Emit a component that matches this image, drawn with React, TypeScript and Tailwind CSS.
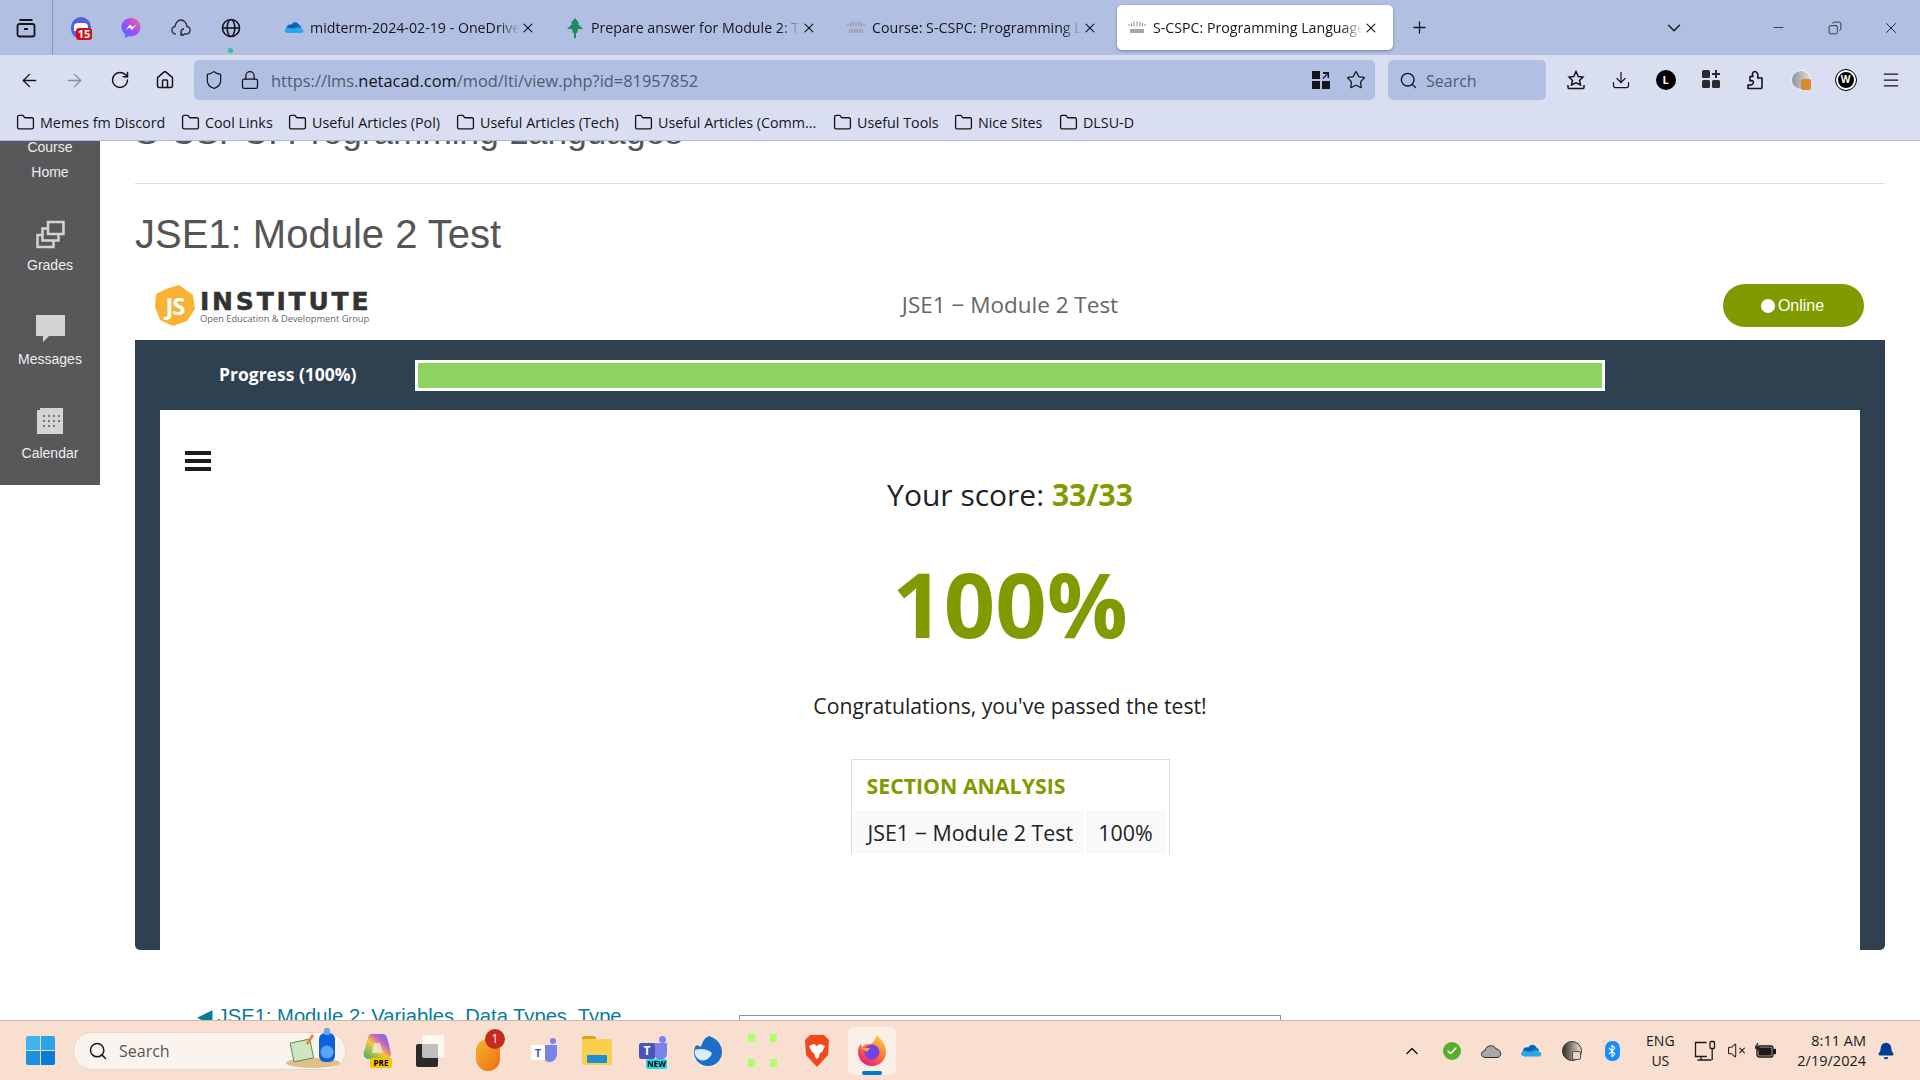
import {
  ArrowLeft, ArrowRight, RotateCw, Home, Shield, Lock, Star, Download, Menu, Search, X, Plus,
  ChevronDown, ChevronUp, Minus, Copy, Folder, Check, Bluetooth, VolumeX, Bell,
} from "lucide-react";

const sans = "font-['Open_Sans',sans-serif]";

const bookmarks = [
  { label: "Memes fm Discord", w: "w-[165px]" },
  { label: "Cool Links", w: "w-[107px]" },
  { label: "Useful Articles (Pol)", w: "w-[168px]" },
  { label: "Useful Articles (Tech)", w: "w-[178px]" },
  { label: "Useful Articles (Comm...", w: "w-[199px]" },
  { label: "Useful Tools", w: "w-[121px]" },
  { label: "Nice Sites", w: "w-[105px]" },
  { label: "DLSU-D", w: "w-[90px]" },
];

function CiscoIcon() {
  return (
    <svg width="18" height="13" viewBox="0 0 18 13">
      <g stroke="#8a8f99" strokeWidth="1">
        <path d="M1 3v2M3.500 2v3.500M6 0.500v5M9 0.500v5M12 0.500v5M14.500 2v3.500M17 3v2" />
      </g>
      <rect x="2" y="8" width="14" height="4" fill="#a4a9b3" />
    </svg>
  );
}

function OneDriveIcon({ size = 22 }: { size?: number }) {
  return (
    <svg width={size} height={size * 0.65} viewBox="0 0 24 16">
      <path d="M9 13 15 5c3-1 6 1 6 4z" fill="#0f78d4" />
      <path d="M3 9c0-3 3-5 6-4 2-4 7-4 9 0l-6 4-6 6H5c-2 0-2-4-2-6z" fill="#0364b8" />
      <path d="M8 15c-3 0-7 0-7-3s3-4 5-3l6 1 6-2 5 3c1 2 0 4-2 4z" fill="#28a8ea" />
    </svg>
  );
}

function TreeIcon() {
  return (
    <svg width="18" height="22" viewBox="0 0 18 22">
      <path d="M9 1 13 6 12 7 17 12 12 12 11 16 7 16 6 12 1 12 6 7 5 6z" fill="#1f8a5f" />
      <path d="M8 14h2v7H8z" fill="#1f8a5f" />
    </svg>
  );
}

function Tab({ icon, label, active }: { icon: React.ReactNode; label: string; active?: boolean }) {
  return (
    <div
      className={`flex items-center w-[276px] h-[45px] pl-[10px] pr-[14px] rounded-[5px] shrink-0 ${
        active ? "bg-white shadow-[0_1px_3px_rgba(0,0,0,0.35)]" : ""
      }`}
    >
      <div className="w-[20px] flex justify-center shrink-0">{icon}</div>
      <div className="ml-[6px] w-[212px] overflow-hidden whitespace-nowrap text-[14.200px] text-[#15141a] [mask-image:linear-gradient(to_right,black_90%,transparent)]">
        {label}
      </div>
      <X size={16} strokeWidth={1.6} className="ml-auto text-[#15141a]" />
    </div>
  );
}

function BrowserChrome() {
  return (
    <div className={`shrink-0 ${sans}`}>
      <div className="flex items-center h-[55px] bg-[#b1bfe3]">
        <div className="flex items-center justify-center w-[53px] h-full border-r border-[#8b97b8]">
          <svg width="20" height="20" viewBox="0 0 20 20" fill="none" stroke="#15141a" strokeWidth="1.8">
            <rect x="1.5" y="6" width="17" height="12.5" rx="2" />
            <path d="M3.5 2h13M8 11h4" />
          </svg>
        </div>
        <div className="flex items-center justify-center w-[50px] ml-[3px]">
          <div className="relative w-[20px] h-[22px] rounded-full bg-[#5b5fd6]">
            <div className="absolute left-[3px] top-[6px] w-[14px] h-[8px] rounded-t bg-white" />
            <div className="absolute left-[5px] top-[11px] w-[16px] h-[12px] rounded-[3px] bg-[#d0101a] text-white text-[11px] font-bold leading-[12px] text-center">15</div>
          </div>
        </div>
        <div className="flex items-center justify-center w-[50px]">
          <svg width="20" height="22" viewBox="0 0 20 22">
            <defs>
              <linearGradient id="msgr" x1="0" y1="1" x2="1" y2="0">
                <stop offset="0" stopColor="#2f7bff" />
                <stop offset="0.5" stopColor="#a04bff" />
                <stop offset="1" stopColor="#ff6a7a" />
              </linearGradient>
            </defs>
            <path d="M10 1C4.5 1 .5 5 .5 10c0 3 1.300 5.300 3.500 7v4l3.500-2c.8.2 1.600.3 2.500.3 5.500 0 9.500-4.300 9.500-9.300S15.500 1 10 1z" fill="url(#msgr)" />
            <path d="M4.500 13 9 7.500l2.500 2.500 4-2.500L11 13l-2.500-2.500z" fill="#fff" />
          </svg>
        </div>
        <div className="flex items-center justify-center w-[50px]">
          <svg width="20" height="20" viewBox="0 0 20 20" fill="none" stroke="#2b2a33" strokeWidth="1.300">
            <path d="M5 16c-3 0-4-2-4-4 0-2 1.500-3.500 3-3.500C4.500 5 7 2 10 2s5.500 3 6 6.500c1.500 0 3 1.500 3 3.500s-1 4-4 4h-2" />
            <path d="M13 11a3 3 0 1 0 0 6h-3v-3" />
          </svg>
        </div>
        <div className="relative flex items-center justify-center w-[50px]">
          <svg width="20" height="20" viewBox="0 0 20 20" fill="none" stroke="#15141a" strokeWidth="1.600">
            <circle cx="10" cy="10" r="8.500" />
            <ellipse cx="10" cy="10" rx="3.800" ry="8.500" />
            <path d="M1.500 10h17" />
          </svg>
          <div className="absolute left-[22px] top-[30px] w-[5px] h-[5px] rounded-full bg-[#2fc4a0]" />
        </div>
        <div className="flex items-center gap-[5px] ml-[18px]">
          <Tab icon={<OneDriveIcon />} label="midterm-2024-02-19 - OneDrive" />
          <Tab icon={<TreeIcon />} label="Prepare answer for Module 2: Test" />
          <Tab icon={<CiscoIcon />} label="Course: S-CSPC: Programming Languages" />
          <Tab icon={<CiscoIcon />} label="S-CSPC: Programming Languages" active />
        </div>
        <Plus size={19} strokeWidth={1.6} className="ml-[17px] text-[#15141a]" />
        <ChevronDown size={22} strokeWidth={1.500} className="ml-[234px] text-[#15141a]" />
        <Minus size={15} strokeWidth={1.200} className="ml-[86px] text-[#15141a]" />
        <Copy size={14} strokeWidth={1.300} className="ml-[42px] -scale-x-100 text-[#15141a]" />
        <X size={18} strokeWidth={1.200} className="ml-[40px] text-[#15141a]" />
      </div>

      <div className="flex items-center h-[50px] pl-[7px] pt-[5px] pb-[5px] bg-[#d9dff1]">
        <div className="flex w-[180px] text-[#15141a]">
          <div className="w-[45px] flex justify-center"><ArrowLeft size={21} strokeWidth={1.600} /></div>
          <div className="w-[45px] flex justify-center"><ArrowRight size={21} strokeWidth={1.600} className="text-[#8b8e99]" /></div>
          <div className="w-[45px] flex justify-center"><RotateCw size={20} strokeWidth={1.800} /></div>
          <div className="w-[45px] flex justify-center"><Home size={20} strokeWidth={1.800} /></div>
        </div>
        <div className="flex items-center w-[1181px] h-[40px] ml-[7px] pl-[10px] pr-[9px] rounded-[5px] bg-[#b1bfe3] text-[#15141a]">
          <Shield size={20} strokeWidth={1.500} />
          <Lock size={20} strokeWidth={1.500} className="ml-[16px]" />
          <div className="ml-[11px] mt-[2px] text-[16.400px] text-[#555a70] whitespace-nowrap">
            https://lms.<span className="text-[#15141a]">netacad.com</span>/mod/lti/view.php?id=81957852
          </div>
          <svg width="18" height="18" viewBox="0 0 18 18" className="ml-auto" fill="#15141a">
            <rect x="0" y="0" width="8" height="8" />
            <rect x="0" y="10" width="8" height="8" />
            <rect x="10" y="10" width="8" height="8" />
            <path d="M11 1h6v6h-1.500V3.600L11.500 8 10.500 7l4-4H11z" />
          </svg>
          <Star size={20} strokeWidth={1.500} className="ml-[16px]" />
        </div>
        <div className="flex items-center w-[158px] h-[40px] ml-[13px] pl-[11px] rounded-[5px] bg-[#b1bfe3]">
          <Search size={19} strokeWidth={1.700} className="text-[#15141a]" />
          <div className="ml-[8px] mt-[2px] text-[16px] text-[#555a70]">Search</div>
        </div>
        <div className="flex ml-[7px] text-[#15141a]">
          <div className="w-[45px] flex justify-center">
            <svg width="20" height="20" viewBox="0 0 20 20" fill="none" stroke="#15141a" strokeWidth="1.500">
              <path d="M10 1.500 12.300 6.500 17 7 13.500 10.500 14.500 15 10 12.800 5.500 15 6.500 10.500 3 7 7.700 6.500z" />
              <path d="M2 15v2.500a1 1 0 0 0 1 1h14a1 1 0 0 0 1-1V15" />
            </svg>
          </div>
          <div className="w-[45px] flex justify-center"><Download size={20} strokeWidth={1.500} /></div>
          <div className="w-[45px] flex justify-center">
            <div className="w-[20px] h-[20px] rounded-full bg-black text-white text-[11px] font-bold leading-[20px] text-center">L</div>
          </div>
          <div className="w-[45px] flex justify-center">
            <svg width="18" height="18" viewBox="0 0 18 18" fill="#2b2a33">
              <rect x="0" y="0" width="8" height="8" rx="1.500" />
              <rect x="0" y="10" width="8" height="8" rx="1.500" />
              <rect x="10" y="10" width="8" height="8" rx="1.500" />
              <path d="M13 0h2v3h3v2h-3v3h-2V5h-3V3h3z" />
            </svg>
          </div>
          <div className="w-[45px] flex justify-center">
            <svg width="20" height="20" viewBox="0 0 20 20" fill="none" stroke="#15141a" strokeWidth="1.600" strokeLinejoin="round">
              <path d="M2 18.500h13a1 1 0 0 0 1-1V8h-4.500c1.500-3-.5-6.500-2.500-6.500S5.500 3.500 7 6.500H4v4.500c2-1 3.500 0 3.500 1.500s-2 3-5.500 2.500z" />
            </svg>
          </div>
          <div className="w-[45px] flex justify-center">
            <div className="relative w-[20px] h-[20px] rounded-full bg-gradient-to-r from-[#8f949c] to-[#d8dade] border border-[#f2f2f2]">
              <div className="absolute right-[-1px] bottom-[-1px] w-[10px] h-[11px] rounded-[2px] bg-[#d98a2b]" />
            </div>
          </div>
          <div className="w-[45px] flex justify-center">
            <div className="w-[20px] h-[20px] rounded-full bg-black border-2 border-double border-white outline outline-1 outline-black text-white text-[10px] font-bold leading-[15px] text-center">W</div>
          </div>
          <div className="w-[45px] flex justify-center"><Menu size={20} strokeWidth={1.500} /></div>
        </div>
      </div>

      <div className="flex items-center h-[36px] pl-[16px] bg-[#d9dff1] border-b border-[#a9b8e2]">
        {bookmarks.map((b) => (
          <div key={b.label} className={`flex items-center shrink-0 ${b.w}`}>
            <Folder size={19} strokeWidth={1.700} className="text-[#15141a] shrink-0" />
            <div className="ml-[5px] text-[14.300px] text-[#15141a] whitespace-nowrap">{b.label}</div>
          </div>
        ))}
      </div>
    </div>
  );
}

function SideItem({ icon, label, className, gap }: { icon: React.ReactNode; label: string; className: string; gap: string }) {
  return (
    <div className={`flex flex-col items-center ${className}`}>
      {icon}
      <div className={`leading-[20px] ${gap}`}>{label}</div>
    </div>
  );
}

function Sidebar() {
  return (
    <div className="flex flex-col w-[100px] h-[344px] shrink-0 bg-[#58585a] text-[14px] text-[#eeeeee] font-['Liberation_Sans',sans-serif]">
      <div className="flex flex-col items-center leading-[25px] mt-[-6px]">
        <div>Course</div>
        <div>Home</div>
      </div>
      <SideItem
        className="mt-[35px]"
        gap="mt-[6px]"
        label="Grades"
        icon={
          <svg width="29" height="29" viewBox="0 0 29 29" fill="none" stroke="#d4d4d4" strokeWidth="2.500">
            <rect x="1.500" y="15" width="16" height="12" />
            <rect x="6.500" y="8.500" width="16" height="12" fill="#58585a" />
            <rect x="12" y="2" width="15.500" height="12" fill="#58585a" />
          </svg>
        }
      />
      <SideItem
        className="mt-[40px]"
        gap="mt-[7px]"
        label="Messages"
        icon={
          <svg width="29" height="27" viewBox="0 0 29 27" fill="#d4d4d4">
            <path d="M0 0h29v21H13l-6 6v-6H0z" />
          </svg>
        }
      />
      <SideItem
        className="mt-[38px]"
        gap="mt-[9px]"
        label="Calendar"
        icon={
          <svg width="27" height="27" viewBox="0 0 27 27">
            <rect x="0" y="1" width="26" height="26" fill="#d4d4d4" />
            <rect x="0" y="0" width="3" height="3" fill="#58585a" />
            <g fill="#777">
              <path d="M6 8h2v2H6zM11 8h2v2h-2zM16 8h2v2h-2zM21 8h2v2h-2zM6 13h2v2H6zM11 13h2v2h-2zM16 13h2v2h-2zM21 13h2v2h-2zM6 18h2v2H6zM11 18h2v2h-2zM16 18h2v2h-2z" />
            </g>
          </svg>
        }
      />
    </div>
  );
}

function Logo() {
  return (
    <div className="flex items-center w-[250px] h-[43px] pl-[20px] shrink-0">
      <div className="relative flex items-center justify-center w-[40px] h-[41px] shrink-0">
        <svg width="40" height="41" viewBox="0 0 40 41" className="absolute inset-0">
          <path d="M24 0 38 10 40 24 32 36 18 41 5 35 0 22 1 9 11 4z" fill="#f9b233" />
        </svg>
        <div className={`relative text-[24px] font-bold text-white tracking-[-1px] ${sans}`}>JS</div>
      </div>
      <div className="ml-[5px] flex flex-col mt-[6px]">
        <div className="font-['DejaVu_Sans',sans-serif] font-bold text-[25px] leading-[22px] tracking-[2.800px] text-[#333333] whitespace-nowrap [-webkit-text-stroke:0.5px_#333333]">
          INSTITUTE
        </div>
        <div className={`text-[9.300px] leading-[14px] mt-[-1px] text-[#666666] whitespace-nowrap ${sans}`}>
          Open Education &amp; Development Group
        </div>
      </div>
    </div>
  );
}

function ResultPanel() {
  return (
    <div className={`flex flex-col w-[1750px] h-[610px] px-[25px] rounded-b-[5px] bg-[#2f4050] ${sans}`}>
      <div className="flex items-center h-[70px] shrink-0">
        <div className="ml-[59px] mt-[-2px] w-[196px] text-[17.500px] font-bold text-white">Progress (100%)</div>
        <div className="w-[1190px] h-[31px] border-[3px] border-white bg-[#8cd35f]" />
      </div>
      <div className="relative flex flex-col items-center flex-1 bg-white text-[#222222]">
        <div className="absolute left-[25px] top-[41px] flex flex-col gap-[4px] w-[26px]">
          <div className="h-[4px] bg-[#1c1c1c]" />
          <div className="h-[4px] bg-[#1c1c1c]" />
          <div className="h-[4px] bg-[#1c1c1c]" />
        </div>
        <div className="mt-[63px] text-[30px] leading-[44px]">
          Your score: <span className="font-bold text-[#7f9b00]">33/33</span>
        </div>
        <div className="mt-[26px] text-[90px] font-bold leading-[120px] text-[#7f9b00]">100%</div>
        <div className="mt-[28px] text-[21.200px] leading-[30px]">Congratulations, you've passed the test!</div>
        <div className="mt-[38px] w-[319px] h-[95px] shrink-0 overflow-hidden border-x border-t border-[#dddddd] px-[3px] pt-[3px]">
          <div className="h-[47px] pl-[12px] pt-[1px] text-[21.300px] font-bold leading-[44px] text-[#7f9b00]">SECTION ANALYSIS</div>
          <div className="flex gap-[2px] h-[44px] text-[21.400px] leading-[46px]">
            <div className="w-[229px] pl-[13px] bg-[#f9f9f9] whitespace-nowrap">JSE1 − Module 2 Test</div>
            <div className="flex-1 text-center bg-[#f9f9f9]">100%</div>
          </div>
        </div>
      </div>
    </div>
  );
}

function PageContent() {
  return (
    <div className="flex flex-col w-[1750px] ml-[35px] shrink-0 font-['Liberation_Sans',sans-serif]">
      <div className="h-[42px] shrink-0 mt-[-30px] text-[35.200px] leading-[42px] text-[#555555] whitespace-nowrap">
        S-CSPC: Programming Languages
      </div>
      <div className="h-px shrink-0 mt-[30px] bg-[#dddddd]" />
      <div className="h-[42px] shrink-0 mt-[29px] text-[40px] leading-[42px] text-[#555555]">JSE1: Module 2 Test</div>
      <div className="flex items-center h-[43px] shrink-0 mt-[29px]">
        <Logo />
        <div className={`flex-1 mt-[-2px] text-center text-[22.500px] text-[#666666] ${sans}`}>JSE1 − Module 2 Test</div>
        <div className="flex justify-end w-[250px] shrink-0 pr-[21px]">
          <div className="flex items-center justify-center w-[141px] h-[43px] rounded-full bg-[#7f9b00] text-[16px] text-white">
            <div className="w-[14px] h-[14px] rounded-full bg-white mr-[3px] ml-[-2px]" />
            Online
          </div>
        </div>
      </div>
      <div className="mt-[13px] shrink-0">
        <ResultPanel />
      </div>
      <div className="flex shrink-0 mt-[54px]">
        <div className="ml-[62px] w-[542px] text-[20.200px] leading-[24px] text-[#0b7a9a] whitespace-nowrap">
          ◀ JSE1: Module 2: Variables, Data Types, Type
        </div>
        <div className="mt-[11px] w-[542px] h-[40px] border border-[#8a8f99] bg-white" />
      </div>
    </div>
  );
}

function Slot({ w, children }: { w: string; children: React.ReactNode }) {
  return <div className={`relative flex items-center justify-center h-[48px] shrink-0 ${w}`}>{children}</div>;
}

function Taskbar() {
  return (
    <div className={`flex items-center h-[60px] shrink-0 border-t border-[#c8b8ac] bg-[#f8dfcf] ${sans}`}>
      <div className="grid grid-cols-2 gap-[1px] w-[29px] h-[29px] ml-[26px] shrink-0">
        <div className="rounded-tl-[2px] bg-[#3fb5ee]" />
        <div className="rounded-tr-[2px] bg-[#2aa3e8]" />
        <div className="rounded-bl-[2px] bg-[#1b90e0]" />
        <div className="rounded-br-[2px] bg-[#0a7ed6]" />
      </div>
      <div className="flex items-center w-[273px] h-[38px] ml-[18px] pl-[14px] rounded-full border border-[#e6d6ca] bg-[#fbf3ee]">
        <Search size={20} strokeWidth={1.800} className="text-[#1a1a1a]" />
        <div className="ml-[11px] text-[16px] text-[#555555]">Search</div>
        <svg width="54" height="42" viewBox="0 0 54 42" className="ml-auto mr-[5px] mt-[-6px]">
          <ellipse cx="27" cy="36" rx="27" ry="5" fill="#e3bd8a" />
          <rect x="6" y="14" width="20" height="19" rx="1" transform="rotate(-12 16 24)" fill="#cfe6c0" stroke="#5c8f4a" />
          <path d="M20 16 26 7l2 2-6 9z" fill="#e8833a" />
          <rect x="33" y="6" width="16" height="29" rx="6" fill="#0a63dc" />
          <rect x="38" y="1" width="6" height="7" rx="2" fill="#6aa6f0" />
          <circle cx="41" cy="25" r="6.500" fill="#5aa5f5" />
        </svg>
      </div>
      <div className="flex ml-[4px]">
        <Slot w="w-[54px]">
          <svg width="28" height="32" viewBox="0 0 28 32" className="mt-[-6px]">
            <defs>
              <linearGradient id="cop" x1="0" y1="1" x2="1" y2="0">
                <stop offset="0" stopColor="#2fb36a" />
                <stop offset="0.45" stopColor="#f4c63d" />
                <stop offset="0.7" stopColor="#c25bd0" />
                <stop offset="1" stopColor="#2a8fe6" />
              </linearGradient>
            </defs>
            <path d="M8 2h12c3 0 4 3 5 7l3 12c0 4-3 6-6 6H6c-4 0-6-3-5-7L5 6c0-2 1-4 3-4z" fill="url(#cop)" />
            <path d="M11 11h6l3 10H9z" fill="#f4ecf0" opacity="0.75" />
          </svg>
          <div className="absolute left-[20px] top-[31px] w-[22px] h-[10px] rounded-[2px] bg-[#f7c400] text-[8px] font-bold leading-[10px] text-center text-black">PRE</div>
        </Slot>
        <Slot w="w-[52px]">
          <div className="relative w-[28px] h-[32px]">
            <div className="absolute left-0 bottom-0 w-[22px] h-[23px] rounded-[2px] bg-[#2a2a2a]" />
            <div className="absolute right-0 top-0 w-[22px] h-[23px] rounded-[2px] bg-white/70" />
          </div>
        </Slot>
        <Slot w="w-[64px]">
          <div className="w-[24px] h-[32px] mt-[8px] rounded-full bg-gradient-to-br from-[#efb62b] to-[#ee6a13]" />
          <div className="absolute left-[29px] top-[2px] w-[20px] h-[20px] rounded-full bg-[#c42b1c] text-white text-[12px] leading-[20px] text-center">1</div>
        </Slot>
        <Slot w="w-[48px]">
          <div className="relative w-[26px] h-[26px]">
            <div className="absolute right-0 top-[7px] w-[15px] h-[17px] rounded-b-full bg-[#7b83eb]" />
            <div className="absolute right-[1px] top-0 w-[6px] h-[6px] rounded-full bg-[#7b83eb]" />
            <div className="absolute left-0 top-[7px] w-[14px] h-[15px] bg-white text-[#4b53bc] text-[11px] font-bold leading-[15px] text-center">T</div>
          </div>
        </Slot>
        <Slot w="w-[58px]">
          <div className="relative w-[30px] h-[26px] mt-[2px]">
            <div className="absolute left-0 top-[-3px] w-[14px] h-[6px] rounded-t-[2px] bg-[#d9a520]" />
            <div className="absolute inset-0 rounded-[2px] bg-[#fbcf4e]" />
            <div className="absolute left-[5px] right-[5px] bottom-[2px] h-[8px] rounded-[1px] bg-[#1d8fd6]" />
          </div>
        </Slot>
        <Slot w="w-[54px]">
          <div className="relative w-[28px] h-[30px]">
            <div className="absolute right-0 top-[7px] w-[13px] h-[17px] rounded-b-full bg-[#7b83eb]" />
            <div className="absolute right-[1px] top-0 w-[7px] h-[7px] rounded-full bg-[#7b83eb]" />
            <div className="absolute left-0 top-[7px] w-[16px] h-[16px] rounded-[2px] bg-[#4b53bc] text-white text-[12px] font-bold leading-[16px] text-center">T</div>
            <div className="absolute left-[7px] bottom-[-3px] w-[21px] h-[10px] rounded-[2px] bg-[#26d9e6] text-[8px] font-bold leading-[10px] text-center text-black">NEW</div>
          </div>
        </Slot>
        <Slot w="w-[54px]">
          <svg width="32" height="32" viewBox="0 0 32 32">
            <path d="M18 1c7 2 13 8 13 16a14 14 0 0 1-28 0c0-2 .5-4 1.500-6 2-1 4 0 5 1 2-3 2-8 8.500-11z" fill="#1c6fc9" />
            <path d="M4 15c5-2 13-1 17 3-2 6-8 9-12 7-4-2-6-6-5-10z" fill="#d8ecfb" />
          </svg>
        </Slot>
        <Slot w="w-[56px]">
          <div className="grid grid-cols-2 gap-x-[15px] gap-y-[17px]">
            <div className="w-[7px] h-[8px] bg-[#adff6e]" />
            <div className="w-[7px] h-[8px] bg-[#adff6e]" />
            <div className="w-[7px] h-[8px] bg-[#adff6e]" />
            <div className="w-[7px] h-[8px] bg-[#adff6e]" />
          </div>
        </Slot>
        <Slot w="w-[54px]">
          <svg width="26" height="34" viewBox="0 0 26 34">
            <path d="M6 1h14l5 5-1 15-11 12L2 21 1 6z" fill="#f1481e" />
            <path d="M5 12l5-2 3 2 3-2 5 2-3 6-2 1-1 4-2 2-2-2-1-4-2-1z" fill="#fff" />
          </svg>
        </Slot>
        <Slot w="w-[56px]">
          <div className="absolute left-[4px] top-0 w-[48px] h-[48px] rounded-[5px] bg-[#fbeee6]" />
          <svg width="30" height="32" viewBox="0 0 30 32" className="relative">
            <defs>
              <linearGradient id="ffx" x1="0.8" y1="0" x2="0.2" y2="1">
                <stop offset="0" stopColor="#ffd43a" />
                <stop offset="0.5" stopColor="#ff7139" />
                <stop offset="1" stopColor="#e31587" />
              </linearGradient>
            </defs>
            <path d="M20 0c3 4 9 8 9 17a14 14 0 1 1-28 0c0-4 1-6 3-8l1 4c2-4 5-4 8-4 2 0 5-3 7-9z" fill="url(#ffx)" />
            <circle cx="15" cy="17" r="7.500" fill="#7542e5" />
            <path d="M4 13h9l-3 4z" fill="#ffa436" />
          </svg>
          <div className="absolute left-[18px] top-[44px] w-[20px] h-[4px] rounded-full bg-[#0078d4]" />
        </Slot>
      </div>
      <div className="flex items-center ml-auto pr-[14px] text-[#1a1a1a]">
        <Slot w="w-[40px]"><ChevronUp size={20} strokeWidth={1.800} /></Slot>
        <Slot w="w-[40px]">
          <div className="flex items-center justify-center w-[18px] h-[18px] rounded-full bg-[#57ae2c]">
            <Check size={12} strokeWidth={3} className="text-white" />
          </div>
        </Slot>
        <Slot w="w-[39px]">
          <svg width="21" height="14" viewBox="0 0 21 14">
            <path d="M5 13.500c-6 0-6-6-1-7C5 1 13 0 15 5c5 0 7 8 1 8.500z" fill="#a8a8a8" stroke="#2b2b2b" />
          </svg>
        </Slot>
        <Slot w="w-[40px]"><OneDriveIcon size={22} /></Slot>
        <Slot w="w-[41px]">
          <div className="relative w-[20px] h-[20px] rounded-full border border-[#333] bg-gradient-to-r from-[#333] to-[#f1e2d8]">
            <div className="absolute right-[0px] bottom-[0px] w-[9px] h-[9px] rounded-[2px] border border-[#555] bg-[#e5d3c8]" />
          </div>
        </Slot>
        <Slot w="w-[40px]">
          <div className="flex items-center justify-center w-[15px] h-[20px] rounded-[7px] bg-[#1a8cff]">
            <Bluetooth size={14} strokeWidth={1.800} className="text-white" />
          </div>
        </Slot>
        <div className="flex flex-col items-center w-[56px] text-[14px] leading-[20px]">
          <div>ENG</div>
          <div>US</div>
        </div>
        <Slot w="w-[33px]">
          <svg width="22" height="22" viewBox="0 0 22 22" fill="none" stroke="#1a1a1a" strokeWidth="1.300">
            <path d="M13 16.500H1.500V2.500h11M7 16.500V20M3.500 20h14" />
            <rect x="16" y="1.500" width="4.500" height="7" rx="1" />
            <path d="M18.200 8.500V20" />
          </svg>
        </Slot>
        <Slot w="w-[30px]"><VolumeX size={19} strokeWidth={1.300} /></Slot>
        <Slot w="w-[29px]">
          <svg width="21" height="15" viewBox="0 0 21 15" fill="none" stroke="#1a1a1a" strokeWidth="1.300">
            <rect x="2" y="3" width="16" height="11" rx="2" fill="#f8dfcf" />
            <rect x="4" y="5" width="12" height="7" fill="#1a1a1a" />
            <rect x="18.500" y="6.500" width="2" height="4" fill="#1a1a1a" />
            <path d="M3 0 0 5h4L2 8" />
          </svg>
        </Slot>
        <div className="flex flex-col items-end ml-[17px] text-[14.500px] leading-[20px] whitespace-nowrap">
          <div>8:11 AM</div>
          <div>2/19/2024</div>
        </div>
        <Slot w="w-[40px]"><Bell size={18} fill="#003e92" className="text-[#003e92]" /></Slot>
      </div>
    </div>
  );
}

export default function App() {
  return (
    <div className="flex flex-col w-[1920px] h-[1080px] overflow-hidden bg-white">
      <BrowserChrome />
      <div className="flex flex-1 min-h-0 overflow-hidden">
        <Sidebar />
        <PageContent />
      </div>
      <Taskbar />
    </div>
  );
}
